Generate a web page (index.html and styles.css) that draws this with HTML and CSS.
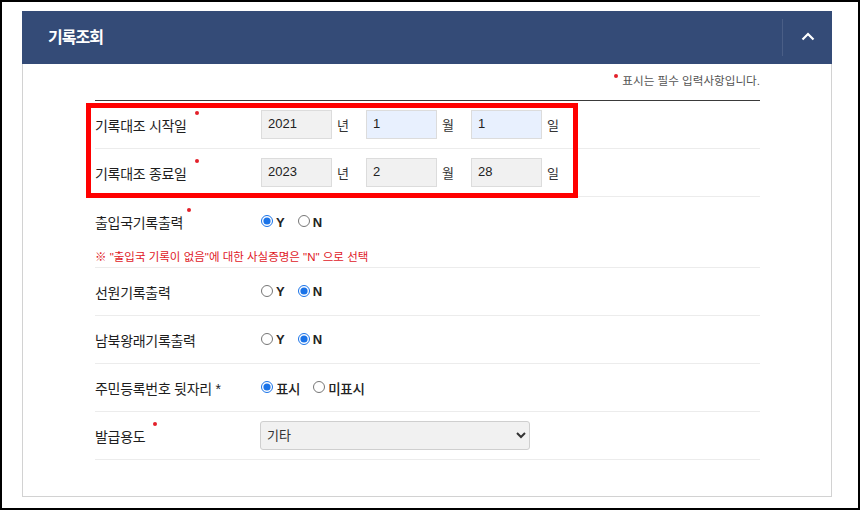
FILE: index.html
```html
<!DOCTYPE html>
<html lang="ko">
<head>
<meta charset="utf-8">
<title>기록조회</title>
<link rel="stylesheet" href="styles.css">
</head>
<body>
<div class="frame">
  <section class="panel">
    <header class="panel-head">
      <h2 class="panel-title">기록조회</h2>
      <button class="toggle" type="button" aria-label="접기">
        <svg width="14" height="9" viewBox="0 0 14 9"><polyline points="1.5,7.5 7,2 12.5,7.5" fill="none" stroke="#fff" stroke-width="2.2"/></svg>
      </button>
    </header>
    <div class="panel-body">
      <p class="req-note"><span class="dot-inline"></span>표시는 필수 입력사항입니다.</p>
      <div class="rows">
        <div class="highlight"></div>
        <div class="row">
          <div class="label"><span class="lbl">기록대조 시작일<span class="req"></span></span></div>
          <div class="field">
            <input class="num" type="text" value="2021"><span class="unit">년</span>
            <input class="num auto" type="text" value="1"><span class="unit">월</span>
            <input class="num auto" type="text" value="1"><span class="unit">일</span>
          </div>
        </div>
        <div class="row">
          <div class="label"><span class="lbl">기록대조 종료일<span class="req"></span></span></div>
          <div class="field">
            <input class="num" type="text" value="2023"><span class="unit">년</span>
            <input class="num" type="text" value="2"><span class="unit">월</span>
            <input class="num" type="text" value="28"><span class="unit">일</span>
          </div>
        </div>
        <div class="row row-tall">
          <div class="row-main">
            <div class="label"><span class="lbl lbl-tight">출입국기록출력<span class="req"></span></span></div>
            <div class="field radios">
              <label class="opt"><input type="radio" name="r1" checked><b>Y</b></label>
              <label class="opt"><input type="radio" name="r1"><b>N</b></label>
            </div>
          </div>
          <p class="warn">※ "출입국 기록이 없음"에 대한 사실증명은 "N" 으로 선택</p>
        </div>
        <div class="row">
          <div class="label"><span class="lbl">선원기록출력</span></div>
          <div class="field radios">
            <label class="opt"><input type="radio" name="r2"><b>Y</b></label>
            <label class="opt"><input type="radio" name="r2" checked><b>N</b></label>
          </div>
        </div>
        <div class="row">
          <div class="label"><span class="lbl">남북왕래기록출력</span></div>
          <div class="field radios">
            <label class="opt"><input type="radio" name="r3"><b>Y</b></label>
            <label class="opt"><input type="radio" name="r3" checked><b>N</b></label>
          </div>
        </div>
        <div class="row">
          <div class="label"><span class="lbl">주민등록번호 뒷자리 *</span></div>
          <div class="field radios">
            <label class="opt"><input type="radio" name="r4" checked><span class="ko">표시</span></label>
            <label class="opt"><input type="radio" name="r4"><span class="ko">미표시</span></label>
          </div>
        </div>
        <div class="row">
          <div class="label"><span class="lbl">발급용도<span class="req req-far"></span></span></div>
          <div class="field">
            <select class="sel"><option>기타</option></select>
          </div>
        </div>
      </div>
    </div>
  </section>
</div>
</body>
</html>
```
FILE: styles.css
```css
* { box-sizing: border-box; }
html, body { margin: 0; padding: 0; background: #fff; }
body {
  font-family: "Liberation Sans", "Noto Sans CJK KR", sans-serif;
  color: #222;
}
.frame {
  width: 860px;
  height: 510px;
  border: 2px solid #000;
  padding: 9px 0 0 20px;
}
.panel { width: 810px; }
.panel-head {
  height: 53px;
  background: #344b77;
  display: flex;
  align-items: center;
  justify-content: space-between;
}
.panel-title {
  margin: 0 0 0 26px;
  font-size: 16px;
  letter-spacing: -1px;
  font-weight: 700;
  color: #fff;
  line-height: 20px;
}
.toggle {
  width: 50px;
  height: 37px;
  border: 0;
  border-left: 1px solid #4a5e86;
  background: transparent;
  display: flex;
  align-items: center;
  justify-content: center;
  padding: 0 0 2px 0;
}
.panel-body {
  border: 1px solid #d2d2d2;
  border-top: 0;
  padding: 0 71px 36px 72px;
}
.req-note {
  margin: 0;
  padding: 7px 0 9px;
  line-height: 20px;
  font-size: 11.6px;
  color: #555;
  text-align: right;
  border-bottom: 1px solid #3a3a3a;
}
.dot-inline {
  display: inline-block;
  width: 4px;
  height: 4px;
  border-radius: 50%;
  background: #e3202a;
  vertical-align: 7px;
  margin-right: 4px;
}
.rows { position: relative; }
.highlight {
  position: absolute;
  left: -9px;
  top: 2px;
  width: 492px;
  height: 95px;
  border: 5px solid #ff0000;
  pointer-events: none;
  z-index: 2;
}
.row {
  display: flex;
  align-items: center;
  height: 48px;
  border-bottom: 1px solid #ececec;
}
.row-tall {
  display: block;
  height: 71px;
}
.row-main {
  display: flex;
  align-items: center;
  height: 50px;
}
.label {
  width: 166px;
  flex: none;
  font-size: 14px;
  line-height: 18px;
  letter-spacing: -0.3px;
  color: #1e1e1e;
  padding-top: 2px;
}
.lbl { position: relative; }
.req {
  position: absolute;
  right: -12px;
  top: -7px;
  width: 4px;
  height: 4px;
  border-radius: 50%;
  background: #e3202a;
}
.lbl-tight .req { right: -8px; }
.req-far { right: -12px; }
.field {
  display: flex;
  align-items: center;
  font-size: 13px;
}
.num {
  width: 71px;
  height: 29px;
  border: 1px solid #dcdcdc;
  background: #f1f1f1;
  font-family: "Liberation Sans", "Noto Sans CJK KR", sans-serif;
  font-size: 13px;
  color: #222;
  padding: 0 0 2px 6px;
  margin: 0;
  outline: none;
}
.num.auto { background: #e8f0fe; }
.unit {
  width: 34px;
  padding-left: 5px;
  font-size: 13px;
  color: #333;
}
.radios { gap: 13px; }
.opt {
  display: inline-flex;
  align-items: center;
  gap: 3px;
  font-size: 13px;
  color: #222;
}
.opt input {
  width: 12px;
  height: 12px;
  margin: 0 0 2px 0;
  accent-color: #1a73e8;
}
.opt b { font-weight: 700; }
.opt .ko { font-size: 13.5px; letter-spacing: -0.3px; font-weight: 500; }
.warn {
  margin: 2px 0 0;
  font-size: 11.5px;
  line-height: 16px;
  color: #e0181f;
  letter-spacing: 0;
}
.sel {
  width: 270px;
  height: 29px;
  border: 1px solid #cfcfcf;
  border-radius: 3px;
  background-color: #f1f1f1;
  font-family: "Liberation Sans", "Noto Sans CJK KR", sans-serif;
  font-size: 13px;
  color: #333;
  padding: 0 2px;
  margin: 0 0 0 -1px;
}
```
